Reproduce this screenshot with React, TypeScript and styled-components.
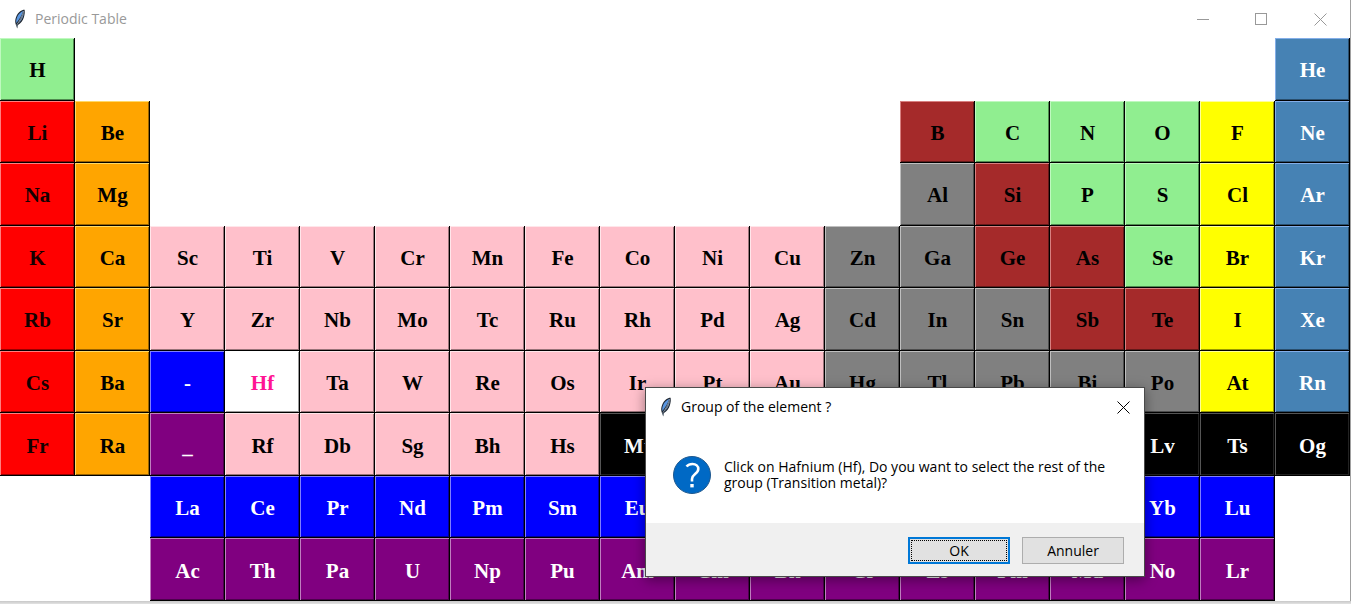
import React from "react";
import styled, { createGlobalStyle, css } from "styled-components";

const GlobalStyle = createGlobalStyle`
  *, *::before, *::after { box-sizing: border-box; }
  body { margin: 0; background: #ffffff; font-family: "Open Sans", "Segoe UI", sans-serif; }
`;

const palette = {
  nonmetal: { bg: "#90ee90", fg: "#000000", light: "#bff9bf", dark: "#4f8a4f" },
  alkali: { bg: "#ff0000", fg: "#140000", light: "#ff7f7f", dark: "#990000" },
  alkaline: { bg: "#ffa500", fg: "#000000", light: "#ffd966", dark: "#996300" },
  transition: { bg: "#ffc0cb", fg: "#000000", light: "#ffe6ea", dark: "#997379" },
  post: { bg: "#808080", fg: "#000000", light: "#bfbfbf", dark: "#4d4d4d" },
  metalloid: { bg: "#a52a2a", fg: "#000000", light: "#d88080", dark: "#631919" },
  halogen: { bg: "#ffff00", fg: "#000000", light: "#ffff99", dark: "#999900" },
  noble: { bg: "#4682b4", fg: "#ffffff", light: "#83aee8", dark: "#2a4e6c" },
  lanthanide: { bg: "#0000ff", fg: "#ffffff", light: "#7f7fff", dark: "#000099" },
  actinide: { bg: "#800080", fg: "#ffffff", light: "#bf7fbf", dark: "#4d004d" },
  unknown: { bg: "#000000", fg: "#ffffff", light: "#555555", dark: "#222222" },
  selected: { bg: "#ffffff", fg: "#ff1493", light: "#ffffff", dark: "#999999" },
};

type Kind = keyof typeof palette;
type Run = [row: number, column: number, kind: Kind, symbols: string];

const runs: Run[] = [
  [1, 1, "nonmetal", "H"],
  [1, 18, "noble", "He"],
  [2, 1, "alkali", "Li"],
  [2, 2, "alkaline", "Be"],
  [2, 13, "metalloid", "B"],
  [2, 14, "nonmetal", "C N O"],
  [2, 17, "halogen", "F"],
  [2, 18, "noble", "Ne"],
  [3, 1, "alkali", "Na"],
  [3, 2, "alkaline", "Mg"],
  [3, 13, "post", "Al"],
  [3, 14, "metalloid", "Si"],
  [3, 15, "nonmetal", "P S"],
  [3, 17, "halogen", "Cl"],
  [3, 18, "noble", "Ar"],
  [4, 1, "alkali", "K"],
  [4, 2, "alkaline", "Ca"],
  [4, 3, "transition", "Sc Ti V Cr Mn Fe Co Ni Cu"],
  [4, 12, "post", "Zn Ga"],
  [4, 14, "metalloid", "Ge As"],
  [4, 16, "nonmetal", "Se"],
  [4, 17, "halogen", "Br"],
  [4, 18, "noble", "Kr"],
  [5, 1, "alkali", "Rb"],
  [5, 2, "alkaline", "Sr"],
  [5, 3, "transition", "Y Zr Nb Mo Tc Ru Rh Pd Ag"],
  [5, 12, "post", "Cd In Sn"],
  [5, 15, "metalloid", "Sb Te"],
  [5, 17, "halogen", "I"],
  [5, 18, "noble", "Xe"],
  [6, 1, "alkali", "Cs"],
  [6, 2, "alkaline", "Ba"],
  [6, 3, "lanthanide", "-"],
  [6, 4, "selected", "Hf"],
  [6, 5, "transition", "Ta W Re Os Ir Pt Au"],
  [6, 12, "post", "Hg Tl Pb Bi Po"],
  [6, 17, "halogen", "At"],
  [6, 18, "noble", "Rn"],
  [7, 1, "alkali", "Fr"],
  [7, 2, "alkaline", "Ra"],
  [7, 3, "actinide", "_"],
  [7, 4, "transition", "Rf Db Sg Bh Hs"],
  [7, 9, "unknown", "Mt Ds Rg Cn Nh Fl Mc Lv Ts Og"],
  [8, 3, "lanthanide", "La Ce Pr Nd Pm Sm Eu Gd Tb Dy Ho Er Tm Yb Lu"],
  [9, 3, "actinide", "Ac Th Pa U Np Pu Am Cm Bk Cf Es Fm Md No Lr"],
];

const elements = runs.flatMap(([row, column, kind, symbols]) =>
  symbols.split(" ").map((symbol, i) => ({ row, column: column + i, kind, symbol }))
);

const Desktop = styled.div`
  position: relative;
  min-height: 100vh;
  display: flex;
  flex-direction: column;
  padding: 0 1px 3px 0;
  background: linear-gradient(to top, #e2e2e2, #c8c8c8 3px, #a0a0a0 3px);
`;

const AppWindow = styled.main`
  flex: 1;
  display: flex;
  flex-direction: column;
  background: #ffffff;
`;

const TitleBar = styled.header<{ $inactive?: boolean }>`
  display: flex;
  align-items: center;
  height: 38px;
  padding-left: 12px;
  color: ${(p) => (p.$inactive ? "#999999" : "#000000")};
`;

const Title = styled.h1`
  flex: 1;
  margin: 0 0 0 8px;
  font-size: 14px;
  font-weight: 400;
  line-height: 20px;
`;

const CaptionButton = styled.button<{ $width: number }>`
  display: flex;
  align-items: center;
  justify-content: center;
  width: ${(p) => p.$width}px;
  height: 100%;
  padding: 0;
  border: 0;
  background: none;
  color: inherit;
`;

const Table = styled.section`
  flex: 1;
  display: grid;
  grid-template-columns: repeat(18, minmax(0, 1fr));
  grid-template-rows: repeat(9, minmax(40px, 1fr));
`;

const Cell = styled.button<{ $kind: Kind; $row: number; $column: number }>`
  grid-row: ${(p) => p.$row};
  grid-column: ${(p) => p.$column};
  padding: 2px 0 0;
  border: 0;
  font: bold 21px/24px "Liberation Serif", Georgia, serif;
  ${({ $kind }) => {
    const c = palette[$kind];
    return css`
      background: ${c.bg};
      color: ${c.fg};
      box-shadow: inset -1px -1px #000000, inset 1px 1px ${c.light}, inset -2px -2px ${c.dark};
    `;
  }}
`;

const Dialog = styled.div`
  position: absolute;
  left: 645px;
  top: 387px;
  width: 500px;
  border: 1px solid #4a4a4a;
  background: #ffffff;
  box-shadow: 0 3px 12px rgba(0, 0, 0, 0.4);
`;

const Message = styled.div`
  display: flex;
  align-items: center;
  gap: 13px;
  height: 97px;
  padding: 0 32px 0 27px;

  svg {
    flex-shrink: 0;
  }
`;

const MessageText = styled.p`
  margin: 0;
  font-size: 14px;
  line-height: 16px;
  color: #000000;
`;

const Actions = styled.div`
  display: flex;
  justify-content: flex-end;
  gap: 12px;
  padding: 14px 20px 12px;
  background: #f0f0f0;
`;

const ActionButton = styled.button<{ $primary?: boolean }>`
  width: 102px;
  height: 27px;
  padding: 0;
  border: ${(p) => (p.$primary ? "2px solid #0078d7" : "1px solid #adadad")};
  outline: ${(p) => (p.$primary ? "1px dotted #000000" : "none")};
  outline-offset: -4px;
  background: #e1e1e1;
  color: #000000;
  font: 14px/16px "Open Sans", "Segoe UI", sans-serif;
`;

const Feather = () => (
  <svg width="15" height="20" viewBox="0 0 15 20" aria-hidden="true">
    <path d="M12.600 0.800C9.500 0.800 6 3.500 4.500 7C3.300 9.800 2.800 12.500 3.600 15L5.200 19.500L6 16C8.800 14.500 11 11.500 12 8C12.700 5.500 13 3 12.600 0.800Z" fill="#1c2530" />
    <path d="M11.300 2C8.500 3 6 5.500 5 8.500C4.200 10.800 4 12.500 4.400 14C6.500 11.500 9.500 7 11.300 2Z" fill="#5a96e0" />
    <path d="M11.800 3.500C11.800 7.500 9.500 12 6.200 14.500C8.500 11.500 10.500 7.500 11.800 3.500Z" fill="#7f9cc0" />
    <path d="M11.800 2C10 8 7.500 12 5 15.500V18" stroke="#aebccb" strokeWidth="0.700" fill="none" />
  </svg>
);

const CloseIcon = () => (
  <svg width="13" height="13" viewBox="0 0 13 13" aria-hidden="true">
    <path d="M0.500 0.500L12.500 12.500M12.500 0.500L0.500 12.500" stroke="currentColor" />
  </svg>
);

const QuestionIcon = () => (
  <svg width="38" height="38" viewBox="0 0 38 38" aria-hidden="true">
    <circle cx="19" cy="19" r="18.500" fill="#0069c5" stroke="#1e588f" />
    <path d="M13.500 10.500C15 8.800 17.200 8 19.500 8C23 8 25.300 10 25.300 13C25.300 18 19 18.200 19 23V25.500" stroke="#ffffff" strokeWidth="2.600" fill="none" />
    <rect x="17.300" y="28" width="3.400" height="3.400" fill="#ffffff" />
  </svg>
);

export default function App() {
  return (
    <>
      <GlobalStyle />
      <Desktop>
        <AppWindow>
          <TitleBar $inactive>
            <Feather />
            <Title>Periodic Table</Title>
            <CaptionButton $width={58} aria-label="Minimize">
              <svg width="12" height="13" viewBox="0 0 12 13"><path d="M0 6.500H12" stroke="currentColor" /></svg>
            </CaptionButton>
            <CaptionButton $width={58} aria-label="Maximize">
              <svg width="12" height="12" viewBox="0 0 12 12"><rect x="0.500" y="0.500" width="11" height="11" fill="none" stroke="currentColor" /></svg>
            </CaptionButton>
            <CaptionButton $width={60} aria-label="Close">
              <CloseIcon />
            </CaptionButton>
          </TitleBar>
          <Table aria-label="Elements">
            {elements.map((e) => (
              <Cell key={`${e.row}-${e.column}`} $kind={e.kind} $row={e.row} $column={e.column}>
                {e.symbol}
              </Cell>
            ))}
          </Table>
        </AppWindow>
        <Dialog role="dialog" aria-label="Group of the element ?">
          <TitleBar>
            <Feather />
            <Title as="h2">Group of the element ?</Title>
            <CaptionButton $width={42} aria-label="Close">
              <CloseIcon />
            </CaptionButton>
          </TitleBar>
          <Message>
            <QuestionIcon />
            <MessageText>
              Click on Hafnium (Hf), Do you want to select the rest of the group (Transition metal)?
            </MessageText>
          </Message>
          <Actions>
            <ActionButton $primary>OK</ActionButton>
            <ActionButton>Annuler</ActionButton>
          </Actions>
        </Dialog>
      </Desktop>
    </>
  );
}
